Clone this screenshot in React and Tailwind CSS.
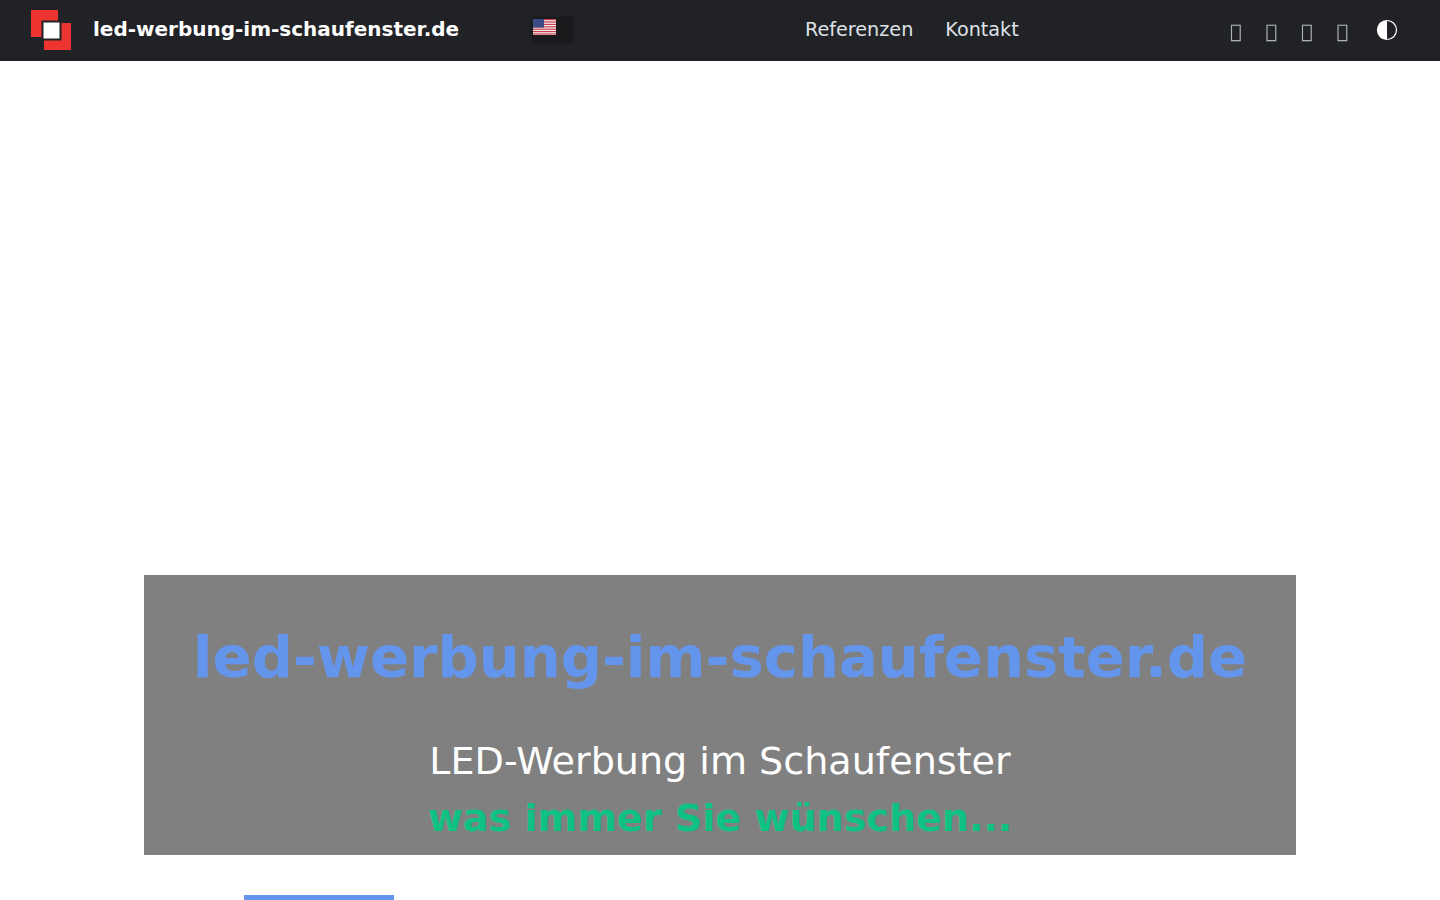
import React from "react";

function Logo() {
  return (
    <svg width="42" height="42" viewBox="0 0 42 42" className="block shrink-0">
      <rect x="1" y="0" width="27" height="27" fill="#ee3431" />
      <rect x="14" y="13" width="27" height="27" fill="#ee3431" />
      <rect x="12.5" y="11.5" width="18" height="18" fill="#fff" stroke="#212226" strokeWidth="2" />
    </svg>
  );
}

function Flag() {
  const stripes = [];
  for (let i = 0; i < 7; i++) {
    stripes.push(<rect key={i} x="0" y={i * 2.4} width="23" height="1.2" fill="#c9404f" />);
  }
  return (
    <svg width="23" height="16" viewBox="0 0 23 16" className="block">
      <rect width="23" height="16" fill="#f3eeee" />
      {stripes}
      <rect width="11" height="8.6" fill="#3c4a85" />
    </svg>
  );
}

function Half() {
  return (
    <svg width="22" height="22" viewBox="0 0 22 22" className="block">
      <circle cx="11" cy="11" r="9.5" fill="#212226" stroke="#fff" strokeWidth="1.2" />
      <path d="M11 1.5a9.5 9.5 0 0 0 0 19z" fill="#fff" />
    </svg>
  );
}

export default function App() {
  return (
    <div className="h-screen overflow-hidden bg-white font-['DejaVu_Sans',sans-serif]">
      <header className="flex h-[61px] items-center bg-[#212226] pl-[30px]">
        <Logo />
        <a className="mb-[3px] ml-[21px] w-[366px] whitespace-nowrap text-[20px] font-bold leading-[30px] text-white">led-werbung-im-schaufenster.de</a>
        <div className="mb-[1px] ml-[73px] flex h-[26px] w-[41px] items-start bg-[#1a1a1c] pl-[1px] pt-[2px] shadow-[0_0_3px_#1a1a1c]">
          <Flag />
        </div>
        <nav className="mb-[3px] ml-[232px] flex gap-[32px] text-[19.2px] leading-[29px] text-[#dee2e6]">
          <a>Referenzen</a>
          <a>Kontakt</a>
        </nav>
        <div className="ml-[211px] flex items-center gap-[24px] pt-[2px] text-[19.2px] leading-[29px] text-[#dee2e6] opacity-75 [will-change:transform]">
          <span>{"\uf09a"}</span>
          <span>{"\uf099"}</span>
          <span>{"\uf16d"}</span>
          <span>{"\uf0e1"}</span>
        </div>
        <div className="mb-[1px] ml-[28px]">
          <Half />
        </div>
      </header>
      <main className="mx-auto w-[1152px] pt-[514px]">
        <section className="flex h-[280px] flex-col items-center bg-[#808080]">
          <h1 className="mt-[48px] whitespace-nowrap text-[57.6px] font-bold leading-[69px] text-[#6495ed]">led-werbung-im-schaufenster.de</h1>
          <p className="mt-[41px] whitespace-nowrap text-[38.08px] leading-[56px] text-white">LED-Werbung im Schaufenster</p>
          <p className="whitespace-nowrap text-[38.08px] font-bold leading-[58px] text-[#10c184]">was immer Sie wünschen...</p>
        </section>
        <div className="ml-[100px] mt-[40px] h-[5px] w-[150px] bg-[#6495ed]" />
      </main>
    </div>
  );
}
